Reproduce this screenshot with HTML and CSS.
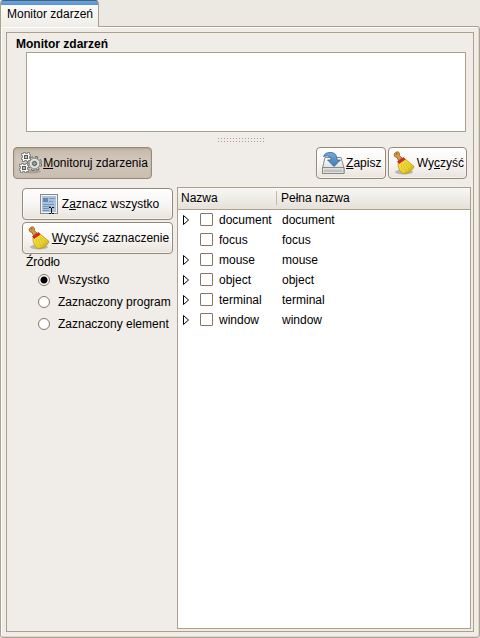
FILE: index.html
```html
<!DOCTYPE html>
<html lang="pl">
<head>
<meta charset="utf-8">
<title>Monitor zdarzeń</title>
<link rel="stylesheet" href="styles.css">
</head>
<body>
<svg class="defs" aria-hidden="true">
  <defs>
    <linearGradient id="straw" x1="0" y1="0" x2="1" y2="1">
      <stop offset="0" stop-color="#fcea5c"/><stop offset=".6" stop-color="#ecd42c"/><stop offset="1" stop-color="#b89800"/>
    </linearGradient>
    <linearGradient id="metal" x1="0" y1="0" x2="0" y2="1">
      <stop offset="0" stop-color="#ffffff"/><stop offset="1" stop-color="#cfd1cc"/>
    </linearGradient>
    <linearGradient id="arrow" x1="0" y1="0" x2="0" y2="1">
      <stop offset="0" stop-color="#78abd6"/><stop offset="1" stop-color="#3c7cb4"/>
    </linearGradient>
    <symbol id="broom" viewBox="0 0 24 24">
      <ellipse cx="12" cy="21" rx="9" ry="2.5" fill="#000" opacity=".22"/>
      <path d="M8 9.500 12.500 7.500 22 15.500C21 18.500 17 22.500 11.500 22.500 8.500 21.500 6 18 6 12.500Z" fill="url(#straw)" stroke="#b0960c" stroke-width=".8"/>
      <path d="M9 13 10.500 20M11 12.500 14 20.500M12.500 11.500 17.500 19M13 10.500 20 17" fill="none" stroke="#cfb318" stroke-width=".6"/>
      <path d="M5.500 10.500 11.500 6.500 13 8.500 7 12.500Z" fill="#e02424" stroke="#b80808" stroke-width=".6"/>
      <path d="M3.500 1.500C5 .3 7 .8 7.500 2.500L7.300 4.500 10 7 6.500 9.500 5 6.500 2.700 5.500C1.800 4 2.300 2.200 3.500 1.500Z" fill="#d69a4c" stroke="#8f5902" stroke-width=".8"/>
      <circle cx="4.700" cy="3" r=".8" fill="#8f5902"/>
    </symbol>
  </defs>
</svg>
<div class="notebook">
  <div class="tabs" role="tablist"><button class="tab" role="tab" aria-selected="true">Monitor zdarzeń</button></div>
  <main class="page">
    <section class="frame">
      <label class="title" for="log">Monitor zdarzeń</label>
      <textarea class="log" id="log"></textarea>
      <div class="grip"></div>
      <div class="toolbar">
        <button class="btn pressed" aria-pressed="true">
          <svg class="icon" viewBox="0 0 24 24">
            <ellipse cx="14" cy="20.500" rx="9" ry="2" fill="#000" opacity=".15"/>
            <circle cx="16.500" cy="12.500" r="6" fill="none" stroke="#555753" stroke-width="3" stroke-dasharray="2.600 2.112"/>
            <circle cx="16.500" cy="12.500" r="5.500" fill="#c3c9c9" stroke="#6b706e" stroke-width=".8"/>
            <circle cx="16.500" cy="12.500" r="6" fill="none" stroke="#c3c9c9" stroke-width="1.500" stroke-dasharray="1.600 3.112" stroke-dashoffset="-.5"/>
            <circle cx="16.500" cy="12.500" r="4" fill="none" stroke="#eeeeec"/>
            <circle cx="16.500" cy="12.500" r="2" fill="#9a9e9b" stroke="#555b5c"/>
            <g id="cog">
              <path d="M5.500 1.500H7.500V2.500H9.500V1.500H11.500V3.500H12.500V5.500H11.500V7.500H12.500V9.500H10.500V10.500H8.500V9.500H6.500V10.500H4.500V8.500H3.500V6.500H4.500V4.500H3.500V2.500H5.500Z" fill="#fafaf9" stroke="#6b706e" stroke-width=".8"/>
              <rect x="6.500" y="4.500" width="3" height="3" fill="#c9c3b8" stroke="#555753"/>
            </g>
            <use href="#cog" x="-2" y="11"/>
          </svg>
          <span><u>M</u>onitoruj zdarzenia</span>
        </button>
        <button class="btn push">
          <svg class="icon" viewBox="0 0 24 24">
            <path d="M4 6.500H20L23 17V22.500H1.500V17Z" fill="url(#metal)" stroke="#888a85"/>
            <path d="M1.500 16.500H23V22.500H1.500Z" fill="#dfe0dd" stroke="#888a85"/>
            <path d="M4 18.500V21M6 18.500V21M8 18.500V21M10 18.500V21M12 18.500V21M14 18.500V21M16 18.500V21M18 18.500V21M20 18.500V21" stroke="#a0a29d"/>
            <path d="M2.500 5.500C3.500 2.500 6 1.500 9 1.500 14 1.500 16 4 16 9H19.500L13 15.500 6.500 9H10C10 5.500 7 4 2.500 5.500Z" fill="url(#arrow)" stroke="#2f6698" stroke-width=".8"/>
          </svg>
          <span><u>Z</u>apisz</span>
        </button>
        <button class="btn">
          <svg class="icon"><use href="#broom"/></svg>
          <span>Wy<u>c</u>zyść</span>
        </button>
      </div>
      <div class="content">
        <div class="side">
          <button class="btn wide">
            <svg class="icon" viewBox="0 0 24 24">
              <rect x="3.500" y="2.500" width="17" height="19" fill="#f4f5f3" stroke="#888a85"/>
              <rect x="5" y="4" width="14" height="16" fill="#a9c3df"/>
              <path d="M6 6H11V10H6Z" fill="#6688ac"/>
              <path d="M12 6.500H18M12 9.500H16M6 12.500H17M6 14.500H14M6 16.500H12M6 18.500H12" stroke="#7594b5"/>
              <path d="M12 15.500H14M15 15.500H17M14.500 16V21M12 21.500H14M15 21.500H17" fill="none" stroke="#111"/>
            </svg>
            <span>Z<u>a</u>znacz wszystko</span>
          </button>
          <button class="btn wide">
            <svg class="icon"><use href="#broom"/></svg>
            <span><u>W</u>yczyść zaznaczenie</span>
          </button>
          <fieldset class="source">
            <legend>Źródło</legend>
            <label><input type="radio" name="source" checked>Wszystko</label>
            <label><input type="radio" name="source">Zaznaczony program</label>
            <label><input type="radio" name="source">Zaznaczony element</label>
          </fieldset>
        </div>
        <div class="list">
          <table>
            <thead><tr><th class="name">Nazwa</th><th>Pełna nazwa</th></tr></thead>
            <tbody>
              <tr><td><div class="cell"><button class="expand" aria-label="Rozwiń document"><svg viewBox="0 0 8 12"><path d="M1.500 1.500V10.500L6.500 6Z"/></svg></button><input type="checkbox" id="c1"><label for="c1">document</label></div></td><td>document</td></tr>
              <tr><td><div class="cell leaf"><input type="checkbox" id="c2"><label for="c2">focus</label></div></td><td>focus</td></tr>
              <tr><td><div class="cell"><button class="expand" aria-label="Rozwiń mouse"><svg viewBox="0 0 8 12"><path d="M1.500 1.500V10.500L6.500 6Z"/></svg></button><input type="checkbox" id="c3"><label for="c3">mouse</label></div></td><td>mouse</td></tr>
              <tr><td><div class="cell"><button class="expand" aria-label="Rozwiń object"><svg viewBox="0 0 8 12"><path d="M1.500 1.500V10.500L6.500 6Z"/></svg></button><input type="checkbox" id="c4"><label for="c4">object</label></div></td><td>object</td></tr>
              <tr><td><div class="cell"><button class="expand" aria-label="Rozwiń terminal"><svg viewBox="0 0 8 12"><path d="M1.500 1.500V10.500L6.500 6Z"/></svg></button><input type="checkbox" id="c5"><label for="c5">terminal</label></div></td><td>terminal</td></tr>
              <tr><td><div class="cell"><button class="expand" aria-label="Rozwiń window"><svg viewBox="0 0 8 12"><path d="M1.500 1.500V10.500L6.500 6Z"/></svg></button><input type="checkbox" id="c6"><label for="c6">window</label></div></td><td>window</td></tr>
            </tbody>
          </table>
        </div>
      </div>
    </section>
  </main>
</div>
</body>
</html>
```

FILE: styles.css
```css
* { box-sizing: border-box; }
body { margin: 0; background: #ece9e2; color: #000; font: 12px/16px "Liberation Sans", Arial, sans-serif; }
button, input, textarea { font: inherit; color: inherit; margin: 0; }
.defs { position: absolute; width: 0; height: 0; }
.notebook { display: flex; flex-direction: column; min-height: 100vh; }
.tabs { display: flex; height: 26px; }
.tab {
  position: relative; z-index: 1; height: 27px; padding: 0 5px 0 6px; white-space: nowrap;
  border: 1px solid #ac9f8c; border-top-color: #3b628c; border-bottom: 0; border-radius: 4px 4px 0 0;
  background: linear-gradient(#6fa5dc 0, #5b93cc 4px, #fbfaf9 4px, #f0ede8 100%);
}
.page {
  flex: 1; display: flex; padding: 5px; background: #f0ede8;
  border: 1px solid #aea18e; border-radius: 0 3px 3px 3px;
  box-shadow: inset 1px 1px #fff, inset -1px -1px #ded7cd;
}
.frame { flex: 1; display: flex; flex-direction: column; min-width: 0; padding: 4px 2px 2px 6px; border: 1px solid #aca08b; }
.title { margin-left: 3px; line-height: 15px; font-weight: bold; }
.log { height: 80px; margin: 0 5px 0 13px; border: 1px solid #aca08b; background: #fff; resize: none; outline: 0; }
.grip {
  align-self: center; width: 48px; height: 4px; margin: 6px 0 5px;
  background:
    repeating-linear-gradient(90deg, transparent 0 1px, #f0ede8 1px 3px),
    repeating-linear-gradient(#a89c8b 0 1px, transparent 1px 3px);
}
.toolbar { display: flex; gap: 2px; padding-right: 4px; }
.push { min-width: 70px; margin-left: auto; }
.btn {
  display: flex; align-items: center; justify-content: center; gap: 1px; height: 32px; padding: 0 2px 0 3px;
  border: 1px solid #978877; border-radius: 4px; white-space: nowrap;
  background: linear-gradient(#fff, #f8f6f4 50%, #e8e3dc); box-shadow: inset 0 0 0 1px #fff8;
}
.pressed { min-width: 139px; background: linear-gradient(#c5baab, #d1c7ba 40%, #c9beb0); box-shadow: inset 0 1px 2px #b0a494; }
.icon { width: 24px; height: 24px; flex: none; }
.content { flex: 1; display: flex; gap: 4px; margin-top: 8px; }
.side { display: flex; flex-direction: column; gap: 2px; width: 160px; flex: none; padding: 1px 0 0 9px; }
.wide { width: 151px; }
.source { display: flex; flex-direction: column; margin: 0; padding: 0 0 0 16px; border: 0; }
.source legend { margin-left: -12px; padding: 0; line-height: 13px; }
.source label { display: flex; align-items: center; gap: 8px; height: 22px; white-space: nowrap; }
input[type="radio"] { appearance: none; width: 12px; height: 12px; border: 1px solid #867665; border-radius: 50%; background: #fff; }
input[type="radio"]:checked { background: radial-gradient(circle, #000 3px, #fff 4px); }
.list { flex: 1; border: 1px solid #aca08b; background: #fff; }
table { width: 100%; border-collapse: collapse; table-layout: fixed; }
th { height: 21px; padding: 0 3px; text-align: left; font-weight: normal; border-bottom: 1px solid #aca08b; }
thead { background: linear-gradient(#f8f7f5, #e6e1d9); }
.name { width: 100px; background: linear-gradient(#c5baab, #c5baab) 98px center / 1px 14px no-repeat; }
td { height: 20px; padding: 0 4px; }
.cell { display: flex; align-items: center; height: 20px; }
.cell label { margin-left: 6px; }
.leaf { padding-left: 18px; }
.expand { width: 8px; height: 12px; padding: 0; margin-right: 10px; border: 0; background: none; }
.expand svg { display: block; width: 8px; height: 12px; fill: #fff; stroke: #000; }
input[type="checkbox"] { appearance: none; flex: none; width: 13px; height: 13px; border: 1px solid #867665; border-radius: 1px; background: #fff; }
```
